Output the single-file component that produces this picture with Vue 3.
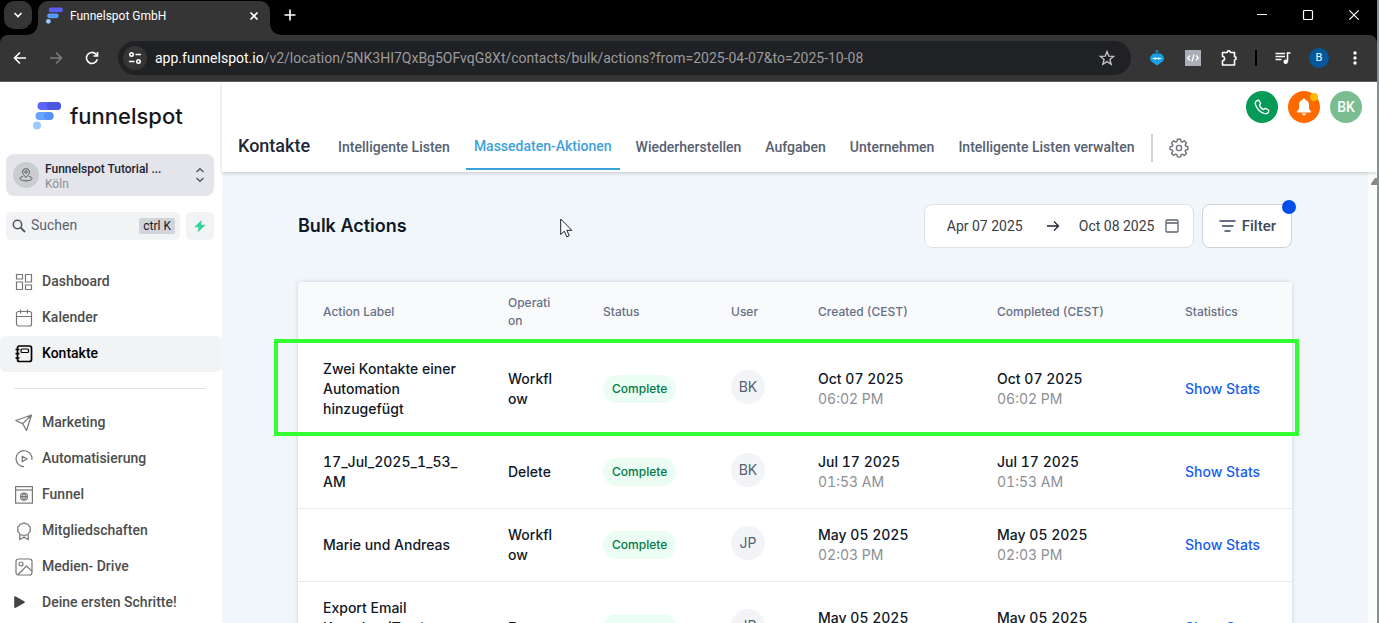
<script setup>
import { ref } from 'vue'

const mainNav = [
  { label: 'Dashboard', icon: 'grid' },
  { label: 'Kalender', icon: 'calendar' },
  { label: 'Kontakte', icon: 'contacts', active: true },
]
const moreNav = [
  { label: 'Marketing', icon: 'send' },
  { label: 'Automatisierung', icon: 'automation' },
  { label: 'Funnel', icon: 'site' },
  { label: 'Mitgliedschaften', icon: 'award' },
  { label: 'Medien- Drive', icon: 'image' },
  { label: 'Deine ersten Schritte!', icon: 'play' },
]
const groups = [mainNav, moreNav]

const icons = {
  grid: '<path d="M1.500 1.500h6v4.500h-6zM10.500 1.500h6V9h-6zM1.500 9h6v7.500h-6zM10.500 12h6v4.500h-6z"/>',
  calendar: '<rect x="1.500" y="2.500" width="15" height="14.500" rx="2"/><path d="M1.500 7.500h15M5.500 .5v4M12.500 .5v4"/>',
  contacts: '<rect x="2.500" y="1" width="14" height="15.500" rx="2" stroke-width="1.700"/><rect x="6" y="4" width="7.500" height="3.500" rx="1"/><path d="M.5 4.500h4M.5 8.700h4M.5 13h4" stroke-width="1.700"/>',
  send: '<path d="M.8 6.500 16.500 1 11.500 16.500 7.700 9.600zM7.700 9.600 16.500 1" stroke-linejoin="round"/>',
  automation: '<path d="M9 16.700A8 8 0 1 1 16.900 10"/><path d="M7.200 6.200v5.600l4.800-2.800z" stroke-linejoin="round"/>',
  site: '<rect x=".6" y=".6" width="16.800" height="16.500"/><path d="M.6 4h16.800"/><circle cx="9" cy="10.700" r="3.500"/><path d="M5.500 10.700h7M9 7.200c-2 2.200-2 4.800 0 7M9 7.200c2 2.200 2 4.800 0 7"/>',
  award: '<path d="M9 .8l1.800 1.100 2.100.1.900 1.900 1.600 1.400-.4 2.100.4 2.100-1.600 1.400-.9 1.800-2.100.2L9 14l-1.800-1.100-2.100-.2-.9-1.800-1.600-1.400L3 7.400l-.4-2.100 1.600-1.400L5.100 2l2.100-.1z" stroke-linejoin="round"/><path d="M4.800 12.500v5L9 15.300l4.200 2.200v-5"/>',
  image: '<rect x="1" y="1" width="16" height="16" rx="2.500"/><circle cx="6" cy="6" r="2"/><path d="M3 16.500 11.500 8 17 13"/>',
  play: '<path d="M-.8 3.300v9.500c0 1 .7 1.400 1.500.9l8.500-4.700c.8-.5.8-1.300 0-1.800L.7 2.500C-.1 2-.8 2.400-.8 3.300z" fill="currentColor" stroke="none"/>',
}

const tabs = [
  { label: 'Intelligente Listen' },
  { label: 'Massedaten-Aktionen', active: true },
  { label: 'Wiederherstellen' },
  { label: 'Aufgaben' },
  { label: 'Unternehmen' },
  { label: 'Intelligente Listen verwalten' },
]

const columns = [
  { key: 'label', title: 'Action Label' },
  { key: 'operation', title: 'Operation' },
  { key: 'status', title: 'Status' },
  { key: 'user', title: 'User' },
  { key: 'created', title: 'Created (CEST)' },
  { key: 'completed', title: 'Completed (CEST)' },
  { key: 'stats', title: 'Statistics' },
]

const rows = [
  { label: 'Zwei Kontakte einer Automation hinzugefügt', operation: 'Workflow', user: 'BK', date: 'Oct 07 2025', time: '06:02 PM', marked: true },
  { label: '17_Jul_2025_1_53_AM', operation: 'Delete', user: 'BK', date: 'Jul 17 2025', time: '01:53 AM' },
  { label: 'Marie und Andreas', operation: 'Workflow', user: 'JP', date: 'May 05 2025', time: '02:03 PM' },
  { label: 'Export Email Kontakte (Test) Kampagne', operation: 'Export', user: 'JP', date: 'May 05 2025', time: '01:48 PM' },
]

const url = ref('app.funnelspot.io/v2/location/5NK3HI7QxBg5OFvqG8Xt/contacts/bulk/actions?from=2025-04-07&to=2025-10-08')
const slash = url.value.indexOf('/')
const host = url.value.slice(0, slash)
const path = url.value.slice(slash)
const search = ref('')
const from = ref('Apr 07 2025')
const to = ref('Oct 08 2025')
</script>

<template>
  <div class="window">
    <div class="browser">
      <div class="tabstrip">
        <button class="tab-search" aria-label="Tabs durchsuchen">
          <svg width="10" height="10" viewBox="0 0 10 10"><path d="M1.500 3 5 6.500 8.500 3" /></svg>
        </button>
        <div class="page-tab">
          <svg class="logo" width="17" height="17" viewBox="0 0 32 32">
            <rect x="5" y="1" width="27" height="9" rx="4.500" fill="#5a5ff0" />
            <rect x="2" y="12" width="22" height="9" rx="4.500" fill="#5b98fb" />
            <circle cx="4.500" cy="27" r="4.500" fill="#96c9ff" />
          </svg>
          <span class="page-title">Funnelspot GmbH</span>
          <button class="bare" aria-label="Tab schließen">
            <svg width="10" height="10" viewBox="0 0 10 10"><path d="M1.500 1.500l7 7M8.500 1.500l-7 7" /></svg>
          </button>
        </div>
        <button class="bare new-tab" aria-label="Neuer Tab">
          <svg width="12" height="12" viewBox="0 0 12 12"><path d="M6 .5v11M.5 6h11" /></svg>
        </button>
        <div class="win-controls">
          <button aria-label="Minimieren"><svg width="10" height="10" viewBox="0 0 10 10"><path d="M0 4.500h10" stroke-width="1" /></svg></button>
          <button aria-label="Maximieren"><svg width="10" height="10" viewBox="0 0 10 10"><rect x=".5" y=".5" width="9" height="9" rx="1" stroke-width="1.200" /></svg></button>
          <button aria-label="Schließen"><svg width="10" height="10" viewBox="0 0 10 10"><path d="M.3.300l9.400 9.400M9.700.300l-9.400 9.400" stroke-width="1.200" /></svg></button>
        </div>
      </div>

      <div class="toolbar">
        <button class="tool" aria-label="Zurück">
          <svg width="14" height="14" viewBox="0 0 14 14"><path d="M13 7H2M7 1.500 1.500 7 7 12.500" /></svg>
        </button>
        <button class="tool dim" aria-label="Vorwärts">
          <svg width="14" height="14" viewBox="0 0 14 14"><path d="M1 7h11M7 1.500 12.500 7 7 12.500" /></svg>
        </button>
        <button class="tool" aria-label="Neu laden">
          <svg width="14" height="14" viewBox="0 0 14 14"><path d="M12.300 8.200A5.500 5.500 0 1 1 11 3.200L12.300 4.500M12.500 1v4h-4" /></svg>
        </button>
        <div class="omnibox">
          <button class="site-info" aria-label="Website-Informationen">
            <svg width="12" height="12" viewBox="0 0 12 12"><circle cx="2.500" cy="2.500" r="1.700" /><path d="M6.500 2.500H12M0 9.500h5.500" /><circle cx="9.500" cy="9.500" r="1.700" /></svg>
          </button>
          <a class="url" href="#"><span class="host">{{ host }}</span>{{ path }}</a>
          <button class="bare star" aria-label="Lesezeichen">
            <svg width="16" height="16" viewBox="0 0 16 16"><path d="M8 1.500l1.800 4.600 4.900.3-3.800 3.100 1.300 4.800L8 11.600l-4.200 2.700 1.300-4.800L1.300 6.400l4.900-.3z" /></svg>
          </button>
        </div>
        <button class="tool" aria-label="Erweiterung">
          <svg width="16" height="16" viewBox="0 0 16 16"><g stroke="none"><circle cx="8" cy="1.500" r="1.400" fill="#168cc9" /><path d="M4.500 3.500h7C13.500 4.500 15 6.500 15 8.500c0 2-1.500 3-3.500 4.500L8 15.500 4.500 13C2.500 11.500 1 10.500 1 8.500c0-2 1.500-4 3.500-5z" fill="#1ba0e2" /></g><path d="M3.500 8.500h9" stroke="#d8f1ff" stroke-width="1" /><path d="M5.500 8.500h1.500M9 8.500h1.500" stroke="#fff" stroke-width="2" /></svg>
        </button>
        <button class="tool" aria-label="Code-Erweiterung">
          <svg width="16" height="16" viewBox="0 0 16 16"><rect width="16" height="16" fill="#a9aeb9" stroke="none" /><path d="M5 5.500 2.500 8 5 10.500M11 5.500 13.500 8 11 10.500M9 4.500l-2 7" stroke-width="1.200" /></svg>
        </button>
        <button class="tool" aria-label="Erweiterungen">
          <svg width="18" height="18" viewBox="0 0 18 18"><path d="M2.500 3.500h4.700a1.600 1.600 0 0 1 3.200 0h4.100v4.200a1.600 1.600 0 0 1 0 3.300V16h-12v-4.300a2.100 2.100 0 0 0 0-4.200z" stroke-linejoin="round" /></svg>
        </button>
        <span class="tool-sep"></span>
        <button class="tool" aria-label="Mediensteuerung">
          <svg width="16" height="14" viewBox="0 0 16 14"><path d="M.5 2.500h9.500M.5 5.500h9.500M.5 8.500h6M12.500 10.500V2h3" /><circle cx="10.700" cy="10.700" r="2.200" fill="#fff" stroke="none" /></svg>
        </button>
        <button class="tool" aria-label="Profil"><span class="profile">B</span></button>
        <button class="tool" aria-label="Menü">
          <svg width="4" height="16" viewBox="0 0 4 16"><g fill="#fff" stroke="none"><circle cx="2" cy="3" r="1.700" /><circle cx="2" cy="8" r="1.700" /><circle cx="2" cy="13" r="1.700" /></g></svg>
        </button>
      </div>
    </div>

    <div class="app">
      <aside class="sidebar">
        <div class="brand">
          <svg class="logo" width="28" height="28" viewBox="0 0 28 28">
            <rect x="4.500" y="0" width="23.500" height="8" rx="4" fill="#5b64fb" />
            <rect x="14" y="0" width="14" height="8" rx="4" fill="#4b55e4" />
            <rect x="2.500" y="10" width="18" height="8" rx="4" fill="#67a3ff" />
            <rect x="11" y="10" width="9.500" height="8" rx="4" fill="#5790f8" />
            <circle cx="4" cy="23.500" r="4" fill="#99caff" />
          </svg>
          <span>funnelspot</span>
        </div>

        <button class="location">
          <span class="loc-icon">
            <svg width="14" height="14" viewBox="0 0 14 14"><path d="M7 9.500C4.800 7.200 3.600 5.700 3.600 4a3.400 3.400 0 0 1 6.800 0C10.400 5.700 9.200 7.200 7 9.500z" /><circle cx="7" cy="4" r="1.200" /><path d="M4 8.500c-2 .4-3 1-3 2 0 1.500 2.500 2.300 6 2.300s6-.8 6-2.300c0-1-1-1.600-3-2" /></svg>
          </span>
          <span class="loc-text"><b>Funnelspot Tutorial ...</b><small>Köln</small></span>
          <svg width="10" height="16" viewBox="0 0 10 16"><path d="M1.500 5 5 1.700 8.500 5M1.500 11 5 14.300 8.500 11" stroke-width="1.500" /></svg>
        </button>

        <div class="search-row">
          <label class="search">
            <svg width="14" height="14" viewBox="0 0 14 14"><circle cx="5.500" cy="5.500" r="4.200" /><path d="M8.700 8.700 13 13" stroke-width="1.800" /></svg>
            <input v-model="search" type="text" placeholder="Suchen" aria-label="Suchen" />
            <kbd>ctrl K</kbd>
          </label>
          <button class="bolt" aria-label="Schnellaktionen">
            <svg width="12" height="12" viewBox="0 0 12 12"><path d="M7.300.500.800 7h4l-.600 4.700L11.200 5H7z" fill="#34d39d" stroke="#34d39d" stroke-width=".5" /></svg>
          </button>
        </div>

        <nav class="side-nav" aria-label="Hauptmenü">
          <ul v-for="(group, g) in groups" :key="g">
            <li v-for="item in group" :key="item.label">
              <a href="#" :class="{ active: item.active }">
                <svg width="18" height="18" viewBox="0 0 18 18" v-html="icons[item.icon]" :class="item.icon"></svg>
                <span>{{ item.label }}</span>
              </a>
            </li>
          </ul>
        </nav>
      </aside>

      <div class="content">
        <header class="top">
          <div class="account">
            <button class="round phone" aria-label="Telefon">
              <svg width="16" height="16" viewBox="0 0 16 16"><path d="M3.200 1.500 4.700 1.200 6.700 4.600 5.400 6.200C6 8 8 10 9.800 10.600L11.400 9.300 14.800 11.300 14.400 13C13.800 14.500 12 15 10.300 14.500 6 13 3 10 1.500 5.700 1 4 1.600 2.200 3.200 1.500z" stroke-linejoin="round" stroke-width="1.300" /></svg>
            </button>
            <button class="round bell" aria-label="Benachrichtigungen">
              <svg width="16" height="18" viewBox="0 0 16 18"><path d="M8 .5c.8 0 1.300.5 1.300 1.300C11.800 2.400 13 4.400 13 7v4l2 2.500c.3.600 0 1-.6 1H1.600c-.6 0-.9-.4-.6-1L3 11V7c0-2.600 1.200-4.600 3.700-5.200C6.700 1 7.200.5 8 .5zM6 15.500h4c0 1.200-.8 2-2 2s-2-.8-2-2z" fill="#fff" stroke="none" /></svg>
              <i></i>
            </button>
            <button class="round me">BK</button>
          </div>
          <div class="section-bar">
            <h1>Kontakte</h1>
            <nav class="tabs" aria-label="Kontakte">
              <a v-for="tab in tabs" :key="tab.label" href="#" :class="{ active: tab.active }">{{ tab.label }}</a>
            </nav>
            <button class="gear" aria-label="Einstellungen">
              <svg width="20" height="20" viewBox="0 0 20 20"><path d="M8.400 1.300h3.200l.5 2.300 1.200.5 2-1.300 2.200 2.200-1.300 2 .5 1.200 2.200.5v2.800l-2.200.6-.5 1.200 1.300 2-2.200 2.200-2-1.300-1.200.5-.5 2.200H8.400l-.5-2.200-1.200-.5-2 1.300-2.200-2.200 1.300-2-.5-1.200-2.200-.6V8.700l2.200-.5.500-1.200-1.300-2 2.200-2.200 2 1.300 1.200-.5z" stroke-linejoin="round" /><circle cx="10" cy="10" r="2.600" /></svg>
            </button>
          </div>
        </header>

        <div class="scroll">
          <main>
            <div class="heading">
              <h2>Bulk Actions</h2>
              <div class="range">
                <input v-model="from" type="text" aria-label="Von" />
                <svg width="14" height="12" viewBox="0 0 14 12"><path d="M1 6h11.500M8 1.500 12.500 6 8 10.500" /></svg>
                <input v-model="to" type="text" aria-label="Bis" />
                <svg class="cal" width="14" height="14" viewBox="0 0 14 14"><rect x="1" y="1" width="12" height="12" rx="1" /><path d="M1 4h12" stroke-width="1.600" /></svg>
              </div>
              <button class="filter">
                <svg width="17" height="12" viewBox="0 0 17 12"><path d="M.5 1h16M3 6h11.500M5.500 11h6" /></svg>
                Filter
                <i></i>
              </button>
            </div>

            <table>
              <colgroup>
                <col v-for="c in columns" :key="c.key" :class="'c-' + c.key" />
              </colgroup>
              <thead>
                <tr><th v-for="c in columns" :key="c.key" scope="col">{{ c.title }}</th></tr>
              </thead>
              <tbody>
                <tr v-for="row in rows" :key="row.label" :class="{ marked: row.marked }">
                  <td>{{ row.label }}</td>
                  <td>{{ row.operation }}</td>
                  <td><span class="badge">Complete</span></td>
                  <td><span class="user">{{ row.user }}</span></td>
                  <td>{{ row.date }}<small>{{ row.time }}</small></td>
                  <td>{{ row.date }}<small>{{ row.time }}</small></td>
                  <td><a href="#">Show Stats</a></td>
                </tr>
              </tbody>
            </table>
            <svg class="pointer" width="13" height="20" viewBox="0 0 13 20"><path d="M.7 1v15.500l3.600-3.300 2.500 5.600 2.500-1.100-2.500-5.400h5z" /></svg>
          </main>
          <div class="track"><svg width="6" height="7" viewBox="0 0 6 7"><path d="M0 7V5.500L4 0h2v7z" /></svg></div>
        </div>
      </div>
    </div>
  </div>
</template>

<style>
body {
  overflow: hidden;
}
</style>

<style scoped>
* {
  box-sizing: border-box;
}
.window {
  height: 100vh;
  display: flex;
  flex-direction: column;
  overflow: hidden;
  border-right: 2px solid #8d8e90;
  font-family: Roboto, "Liberation Sans", sans-serif;
  background: #fff;
}
button {
  font: inherit;
  color: inherit;
  border: 0;
  padding: 0;
  background: none;
}
svg {
  display: block;
  flex: none;
  fill: none;
  stroke: currentColor;
  overflow: visible;
}
svg.logo {
  stroke: none;
}
a {
  color: inherit;
  text-decoration: none;
}
input {
  font: inherit;
  color: inherit;
  border: 0;
  padding: 0;
  min-width: 0;
  background: none;
  outline: 0;
}

/* browser frame */
.browser {
  flex: none;
  background: #000;
  color: #fff;
  margin-right: -2px;
  padding-right: 2px;
}
.browser svg {
  stroke-width: 1.6;
}
.tabstrip {
  height: 35px;
  display: flex;
  align-items: center;
}
.tab-search {
  width: 28px;
  height: 28px;
  margin: 0 6px 5px 4px;
  border-radius: 10px;
  background: #353535;
  display: grid;
  place-items: center;
}
.page-tab {
  position: relative;
  align-self: flex-end;
  width: 232px;
  height: 34px;
  padding: 0 11px 5px 8px;
  display: flex;
  align-items: center;
  border-radius: 10px 10px 0 0;
  background: #353535;
}
.page-tab::before,
.page-tab::after {
  content: "";
  position: absolute;
  bottom: 0;
  width: 10px;
  height: 10px;
}
.page-tab::before {
  left: -10px;
  background: radial-gradient(circle at 0 0, #000 9px, #353535 10px);
}
.page-tab::after {
  right: -10px;
  background: radial-gradient(circle at 100% 0, #000 9px, #353535 10px);
}
.page-title {
  flex: 1;
  margin-left: 7px;
  font-size: 12px;
}
.new-tab {
  margin: 0 0 5px 14px;
}
.win-controls {
  margin-left: auto;
  display: flex;
}
.win-controls button {
  width: 46px;
  height: 30px;
  margin-bottom: 5px;
  display: grid;
  place-items: center;
}
.toolbar {
  height: 47px;
  display: flex;
  align-items: center;
  padding: 0 4px 0 2px;
  background: #353535;
  border-bottom: 1px solid #5c5c5c;
  border-radius: 8px 8px 0 0;
}
.tool {
  width: 36px;
  height: 34px;
  display: grid;
  place-items: center;
}
.dim {
  color: #7d7d7d;
}
.omnibox {
  flex: 1;
  height: 34px;
  margin: 0 8px;
  padding: 0 16px 0 5px;
  border-radius: 17px;
  background: #202124;
  display: flex;
  align-items: center;
}
.site-info {
  width: 24px;
  height: 24px;
  border-radius: 50%;
  background: #353535;
  display: grid;
  place-items: center;
}
.url {
  flex: 1;
  margin-left: 8px;
  font-size: 14px;
  color: #9a9b9d;
  white-space: nowrap;
}
.host {
  color: #fff;
}
.star {
  color: #c7c7c7;
}
.browser .star svg {
  stroke-width: 1.3;
}
.tool-sep {
  width: 2px;
  height: 16px;
  margin: 0 8px;
  background: #000;
}
.profile {
  width: 20px;
  height: 20px;
  border-radius: 50%;
  background: #04579b;
  font-size: 11px;
  line-height: 20px;
}

/* application */
.app {
  flex: 1;
  min-height: 0;
  display: flex;
}
.sidebar {
  flex: none;
  width: 222px;
  overflow: hidden;
}
.brand {
  display: flex;
  align-items: center;
  gap: 9px;
  height: 32px;
  margin: 18px 0 22px 33px;
  font-family: Inter, sans-serif;
  font-size: 22px;
  font-weight: 500;
  color: #17181c;
}
.brand span {
  line-height: 32px;
}
.location {
  width: 208px;
  height: 42px;
  margin-left: 6px;
  padding: 0 9px 0 7px;
  display: flex;
  align-items: center;
  border-radius: 8px;
  background: #e4e5ea;
  color: #55585f;
  text-align: left;
}
.loc-icon {
  width: 26px;
  height: 26px;
  border-radius: 50%;
  background: #cbcccf;
  display: grid;
  place-items: center;
}
.loc-text {
  flex: 1;
  margin-left: 6px;
  padding-top: 3px;
  font-size: 12px;
  line-height: 15px;
}
.loc-text b {
  display: block;
  font-weight: 500;
  color: #1c2433;
}
.loc-text small {
  display: block;
  font-size: 12px;
  color: #8b8e97;
}
.search-row {
  display: flex;
  gap: 6px;
  margin: 16px 0 0 6px;
}
.search {
  width: 174px;
  height: 28px;
  padding: 0 5px 0 6px;
  display: flex;
  align-items: center;
  border-radius: 5px;
  background: #f2f3f5;
  color: #4b5361;
}
.search svg {
  stroke-width: 1.5;
}
.search input {
  flex: 1;
  margin-left: 5px;
  padding-bottom: 2px;
  font-size: 14px;
}
.search input::placeholder {
  color: #5c6370;
  opacity: 1;
}
kbd {
  padding: 0 4px;
  border-radius: 2px;
  background: #d1d5db;
  color: #111827;
  font: 12px/16px Roboto, sans-serif;
}
.bolt {
  width: 28px;
  height: 28px;
  border-radius: 5px;
  background: #f2f3f5;
  display: grid;
  place-items: center;
}
.side-nav {
  margin-top: 24px;
}
.side-nav ul {
  list-style: none;
  margin: 0;
  padding: 0;
}
.side-nav ul + ul::before {
  content: "";
  display: block;
  height: 1px;
  margin: 16px 16px 16px 14px;
  background: #e2e2e4;
}
.side-nav a {
  height: 36px;
  padding-left: 15px;
  display: flex;
  align-items: center;
  gap: 9px;
  border-radius: 6px;
  font-size: 14px;
  font-weight: 500;
  color: #4d4d4d;
}
.side-nav a span {
  padding-bottom: 2px;
}
.side-nav svg {
  color: #777;
  stroke-width: 1.2;
}
.side-nav .active,
.side-nav .active svg {
  color: #000;
}
.side-nav .active {
  background: #f2f3f5;
}
.side-nav svg.play {
  color: #444;
}

.content {
  flex: 1;
  min-width: 0;
  display: flex;
  flex-direction: column;
}
.top {
  position: relative;
  z-index: 1;
  flex: none;
  height: 90px;
  background: #fff;
  box-shadow: 0 1px 4px rgba(0, 0, 0, 0.2);
  clip-path: inset(0 0 -6px -2px);
}
.account {
  display: flex;
  justify-content: flex-end;
  gap: 10px;
  padding: 9px 15px 0;
}
.round {
  position: relative;
  width: 32px;
  height: 32px;
  border-radius: 50%;
  color: #fff;
  font-size: 14px;
  font-weight: 500;
  display: grid;
  place-items: center;
}
.phone {
  background: #059a56;
}
.bell {
  background: #ff6a00;
}
.bell i {
  position: absolute;
  top: 2px;
  right: 2px;
  width: 8px;
  height: 8px;
  border-radius: 50%;
  background: #ffb900;
}
.me {
  background: #79bd90;
}
.section-bar {
  height: 47px;
  display: flex;
  align-items: center;
  padding-left: 16px;
}
h1 {
  margin: 0 20px 2px 0;
  font-size: 18px;
  font-weight: 500;
  line-height: 24px;
  color: #1f2937;
}
.tabs {
  display: flex;
  align-self: stretch;
  gap: 8px;
}
.tabs a {
  padding: 1px 8px 0;
  font-size: 14px;
  font-weight: 500;
  line-height: 46px;
  color: #566070;
  white-space: nowrap;
}
.tabs .active {
  padding-top: 0;
  color: #3fa1dc;
  border-bottom: 2px solid #37a0dd;
}
.gear {
  height: 28px;
  margin: 3px 0 0 8px;
  padding-left: 16px;
  border-left: 2px solid #d0d2d6;
  color: #6f7378;
}
.gear svg {
  stroke-width: 1.4;
}
.scroll {
  flex: 1;
  min-height: 0;
  display: flex;
  background: #f1f6fa;
}
main {
  position: relative;
  flex: 1;
  min-width: 0;
  padding: 32px 76px 0;
}
.track {
  width: 9px;
  padding: 6px 0 0 3px;
  background: #fbfcfc;
}
.track path {
  fill: #8a8a8a;
  stroke: none;
}
.heading {
  display: flex;
  align-items: center;
  gap: 8px;
  margin-bottom: 34px;
}
h2 {
  flex: 1;
  margin: 0;
  font: 600 18px/28px Inter, sans-serif;
  color: #101828;
}
.range,
.filter {
  height: 44px;
  display: flex;
  align-items: center;
  background: #fff;
  border: 1px solid #dfe1e6;
  border-radius: 8px;
  font-size: 14px;
}
.range {
  width: 270px;
  padding: 0 14px 0 22px;
  color: #3b3d42;
}
.range input {
  width: 78px;
}
.range svg {
  margin: 0 19px 0 21px;
  color: #1c2433;
  stroke-width: 1.3;
}
.range .cal {
  margin: 0 0 0 8px;
  color: #5e6470;
}
.filter {
  position: relative;
  padding: 0 15px 0 16px;
  gap: 6px;
  border-color: #cdd2da;
  font-size: 15px;
  font-weight: 500;
  color: #3f4758;
}
.filter svg {
  stroke-width: 1.8;
  color: #667085;
}
.filter i {
  position: absolute;
  top: -5px;
  right: -5px;
  width: 14px;
  height: 14px;
  border-radius: 50%;
  background: #004eeb;
}

table {
  width: 100%;
  table-layout: fixed;
  border-collapse: separate;
  border-spacing: 0;
  border-radius: 4px 4px 0 0;
  background: #fff;
  box-shadow: 0 0 4px rgba(30, 50, 90, 0.2);
  font-family: Inter, sans-serif;
  font-variant-numeric: tabular-nums;
}
.c-label { width: 185px; }
.c-operation { width: 95px; }
.c-status { width: 128px; }
.c-user { width: 87px; }
.c-created { width: 179px; }
.c-completed { width: 188px; }
.c-stats { width: 132px; }
th {
  height: 61px;
  padding: 12px 25px 13px;
  background: #f9fafc;
  font-size: 12px;
  font-weight: 500;
  line-height: 18px;
  text-align: left;
  color: #667085;
  overflow-wrap: anywhere;
}
th:first-child {
  border-top-left-radius: 4px;
}
td {
  padding: 16px 25px;
  border-bottom: 1px solid #e8eaee;
  font-size: 14px;
  font-weight: 500;
  line-height: 20px;
  color: #101828;
  overflow-wrap: anywhere;
}
th:nth-child(n + 3),
td:nth-child(n + 3) {
  padding-right: 0;
  white-space: nowrap;
}
td small {
  display: block;
  font-size: 14px;
  font-weight: 400;
  color: #8c8f94;
}
td a {
  color: #155eef;
}
.badge {
  display: inline-block;
  height: 28px;
  padding: 0 9px;
  border-radius: 14px;
  background: #ecfdf3;
  color: #027a48;
  font-size: 12px;
  line-height: 28px;
}
.user {
  display: block;
  width: 34px;
  height: 34px;
  margin-bottom: 4px;
  border-radius: 50%;
  background: #f2f4f7;
  color: #566176;
  font: 14px/34px Inter, sans-serif;
  text-align: center;
}
tbody tr {
  height: 73px;
}
tbody .marked {
  position: relative;
}
.marked::after {
  content: "";
  position: absolute;
  inset: -4px -7px 0 -24px;
  border: 4px solid #33ff33;
}
.pointer {
  position: absolute;
  top: 46px;
  left: 338px;
  fill: #fff;
  stroke: #1c2030;
}
</style>
